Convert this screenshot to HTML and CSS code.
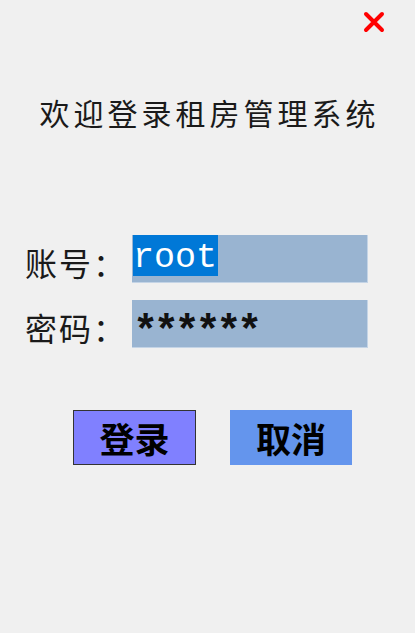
FILE: index.html
```html
<!DOCTYPE html>
<html lang="zh">
<head>
<meta charset="utf-8">
<link rel="stylesheet" href="styles.css">
</head>
<body>
<div class="window">
  <div class="topbar">
    <svg class="close" width="22" height="22" viewBox="0 0 22 22"><path d="M3 3 L19 19 M19 3 L3 19" stroke="#ff0000" stroke-width="4" stroke-linecap="round"/></svg>
  </div>
  <h1 class="title">欢迎登录租房管理系统</h1>
  <div class="form">
    <div class="row">
      <span class="label">账号：</span>
      <div class="field"><span class="sel">root</span></div>
    </div>
    <div class="row">
      <span class="label">密码：</span>
      <div class="field"><span class="txt">******</span></div>
    </div>
  </div>
  <div class="buttons">
    <div class="btn btn-login">登录</div>
    <div class="btn btn-cancel">取消</div>
  </div>
</div>
</body>
</html>
```
FILE: styles.css
```css
html, body {
  margin: 0;
  padding: 0;
  background: #f0f0f0;
}
.window {
  width: 415px;
  height: 633px;
  font-family: "Noto Sans CJK SC", sans-serif;
  color: #000;
}
.topbar {
  display: flex;
  justify-content: flex-end;
  padding: 11px 30px 0 0;
  height: 22px;
}
.close {
  display: block;
}
.title {
  margin: 59px 0 0 0;
  font-size: 30px;
  font-weight: 400;
  letter-spacing: 4px;
  text-align: center;
  padding-left: 4px;
  line-height: 40px;
  color: #1a1a1a;
  white-space: nowrap;
}
.form {
  margin-top: 103px;
  display: flex;
  flex-direction: column;
  gap: 17px;
  padding-left: 25px;
}
.row {
  display: flex;
  align-items: center;
  height: 48px;
}
.label {
  flex: 0 0 107px;
  white-space: nowrap;
  font-size: 32px;
  letter-spacing: 2px;
  color: #1a1a1a;
  line-height: 48px;
  margin-top: 6px;
}
.field {
  flex: 0 0 auto;
  width: 234px;
  height: 47px;
  background: #99b4d1;
  border-right: 1px solid #c4d4e6;
  border-bottom: 1px solid #c4d4e6;
  box-sizing: content-box;
  font-family: "Liberation Mono", monospace;
  font-size: 35px;
  line-height: 41px;
  padding-left: 1px;
}
.sel {
  display: inline-block;
  background: #0078d7;
  color: #fff;
  height: 41px;
  padding: 5px 1px 0 0;
  box-sizing: border-box;
  line-height: 36px;
  vertical-align: top;
}
.txt {
  display: inline-block;
  color: #111;
  font-size: 42px;
  letter-spacing: -4.4px;
  line-height: 47px;
  height: 47px;
  padding-top: 10px;
  box-sizing: border-box;
  font-weight: 700;
  vertical-align: top;
}
.buttons {
  margin-top: 62px;
  display: flex;
  gap: 34px;
  padding-left: 73px;
}
.btn {
  width: 123px;
  height: 55px;
  box-sizing: border-box;
  display: flex;
  align-items: center;
  justify-content: center;
  font-size: 35px;
  font-weight: 700;
  color: #000;
}
.btn-login {
  background: #8080ff;
  border: 1px solid #333;
}
.btn-cancel {
  width: 122px;
  background: #6495ed;
}
```
